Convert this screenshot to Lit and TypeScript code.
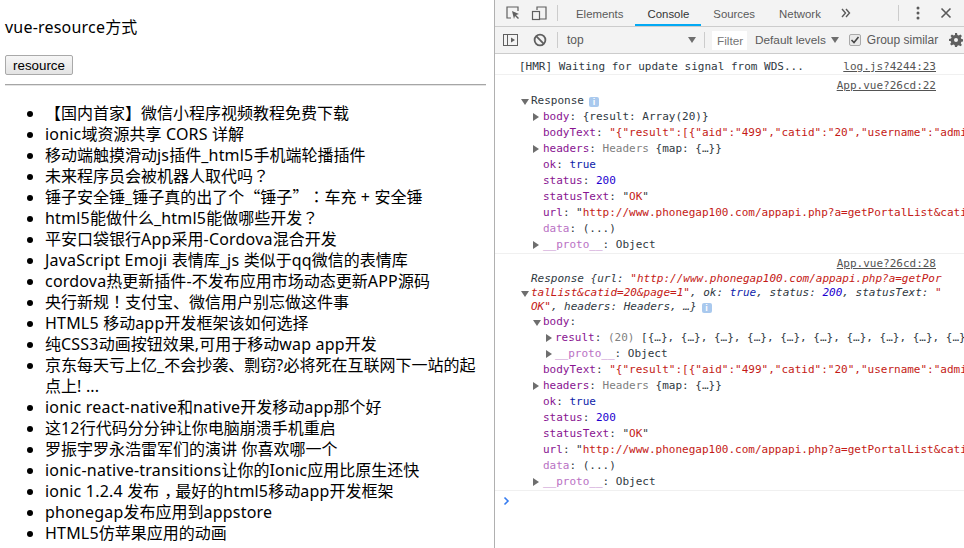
import { LitElement, html, css } from 'lit';
import { customElement } from 'lit/decorators.js';

const ARTICLES = [
  '【国内首家】微信小程序视频教程免费下载',
  'ionic域资源共享 CORS 详解',
  '移动端触摸滑动js插件_html5手机端轮播插件',
  '未来程序员会被机器人取代吗？',
  '锤子安全锤_锤子真的出了个“锤子”：车充 + 安全锤',
  'html5能做什么_html5能做哪些开发？',
  '平安口袋银行App采用-Cordova混合开发',
  'JavaScript Emoji 表情库_js 类似于qq微信的表情库',
  'cordova热更新插件-不发布应用市场动态更新APP源码',
  '央行新规！支付宝、微信用户别忘做这件事',
  'HTML5 移动app开发框架该如何选择',
  '纯CSS3动画按钮效果,可用于移动wap app开发',
  '京东每天亏上亿_不会抄袭、剽窃?必将死在互联网下一站的起点上! ...',
  'ionic react-native和native开发移动app那个好',
  '这12行代码分分钟让你电脑崩溃手机重启',
  '罗振宇罗永浩雷军们的演讲 你喜欢哪一个',
  'ionic-native-transitions让你的Ionic应用比原生还快',
  'ionic 1.2.4 发布，最好的html5移动app开发框架',
  'phonegap发布应用到appstore',
  'HTML5仿苹果应用的动画',
];

const URL_TEXT = 'http://www.phonegap100.com/appapi.php?a=getPortalList&catid=20&page=1';
const BODY_TEXT = '{"result":[{"aid":"499","catid":"20","username":"admin","title":"';

@customElement('app-root')
export class AppRoot extends LitElement {
  static styles = css`
    :host {
      display: flex;
      width: 964px;
      height: 548px;
      overflow: hidden;
      background: #fff;
      color: #000;
      font-family: 'Noto Sans', 'Noto Sans CJK SC', sans-serif;
    }
    .page {
      width: 486px;
      flex: none;
      padding: 0 0 0 5px;
      box-sizing: border-box;
      overflow: hidden;
    }
    .heading {
      margin: 18px 0 0;
      font-size: 16px;
      line-height: 18px;
    }
    .fetch {
      display: block;
      margin: 19px 0 0;
      width: 68px;
      height: 20px;
      padding: 0;
      font: 13.33px 'Liberation Sans', sans-serif;
      color: #000;
      background: linear-gradient(#f6f6f6, #e3e3e3);
      border: 1px solid #a9a9a9;
      border-radius: 2px;
    }
    .rule {
      margin: 9px 0 0;
      height: 2px;
      background: #a6a6a6;
      border-bottom: 1px solid #e4e4e4;
      box-sizing: border-box;
    }
    ul {
      margin: 17px 0 0;
      padding: 0 0 0 40px;
      font-size: 16px;
      line-height: 21px;
      text-spacing-trim: space-all;
    }
    .lat { letter-spacing: 0.2px; }
    .quote { font-family: 'Noto Sans CJK SC', sans-serif; line-height: 1; }
    .punct { font-family: 'Noto Sans CJK TC', sans-serif; line-height: 1; }
    .comma { padding-left: 5px; margin-right: -5px; line-height: 1; }
    .devtools {
      flex: none;
      width: 470px;
      margin-left: 8px;
      border-left: 1px solid #b0b0b0;
      box-sizing: content-box;
      display: flex;
      flex-direction: column;
      overflow: hidden;
      font-family: 'Liberation Sans', sans-serif;
      font-size: 12px;
      color: #5a5a5a;
    }
    .bar {
      flex: none;
      display: flex;
      align-items: center;
      box-sizing: border-box;
      background: #f3f3f3;
      border-bottom: 1px solid #cccccc;
      white-space: nowrap;
    }
    .tabs { height: 27px; }
    .filters { height: 27px; }
    .bar svg { flex: none; display: block; }
    .sep {
      flex: none;
      width: 1px;
      height: 16px;
      background: #cccccc;
    }
    .tab {
      height: 26px;
      line-height: 29px;
      box-sizing: border-box;
      padding: 0 12px;
      font-size: 11.4px;
    }
    .tab.active {
      color: #333;
      border-bottom: 2px solid #03a9f4;
    }
    .context {
      width: 129px;
      margin-left: 9px;
      display: flex;
      justify-content: space-between;
      align-items: center;
      box-sizing: border-box;
      line-height: 17px;
    }
    .caret {
      width: 0;
      height: 0;
      border-left: 4px solid transparent;
      border-right: 4px solid transparent;
      border-top: 6px solid #6e6e6e;
    }
    .filter {
      margin-left: 7px;
      width: 35px;
      height: 19px;
      padding-left: 5px;
      box-sizing: border-box;
      line-height: 21px;
      background: #fff;
      font-size: 11.8px;
      color: #757575;
    }
    .levels {
      margin-left: 8px;
      display: flex;
      align-items: center;
      gap: 5px;
      font-size: 11.8px;
      line-height: 17px;
    }
    .check {
      margin-left: 10px;
      width: 12px;
      height: 12px;
      box-sizing: border-box;
      border: 1px solid #a9a9a9;
      border-radius: 2px;
      background: #e9e9e9;
    }
    .group { margin-left: 6px; line-height: 17px; }
    .log {
      flex: 1;
      min-height: 0;
      overflow: hidden;
      font-family: 'DejaVu Sans Mono', monospace;
      font-size: 11px;
      line-height: 16px;
      color: #303942;
      background: #fff;
    }
    .msg {
      border-bottom: 1px solid #f0f0f0;
      padding-left: 24px;
      white-space: nowrap;
      overflow: hidden;
      box-sizing: border-box;
    }
    .src {
      float: right;
      margin-right: 29px;
      color: #545454;
      text-decoration: underline;
    }
    .first { height: 21px; padding-top: 5px; }
    .entry { padding-top: 3px; height: 179px; }
    .second { height: 237px; padding-top: 2px; }
    .spacer { height: 15px; }
    .row {
      position: relative;
      display: block;
      height: 16px;
    }
    .lvl0 { padding-left: 12px; }
    .lvl1 { padding-left: 24px; }
    .lvl2 { padding-left: 36px; }
    .arrow {
      position: absolute;
      top: 4px;
      width: 0;
      height: 0;
    }
    .lvl0 .arrow { left: 2px; }
    .lvl1 .arrow { left: 14px; }
    .lvl2 .arrow { left: 27px; }
    .arrow.right {
      border-top: 4px solid transparent;
      border-bottom: 4px solid transparent;
      border-left: 6px solid #6e6e6e;
    }
    .arrow.down {
      top: 6px;
      border-left: 4px solid transparent;
      border-right: 4px solid transparent;
      border-top: 6px solid #6e6e6e;
    }
    .k { color: #881391; }
    .k.dim { color: #b971c4; }
    .str { color: #c41a16; }
    .num { color: #1c00cf; }
    .bool { color: #0d22aa; }
    .gray { color: #808080; }
    .info {
      display: inline-block;
      vertical-align: -1px;
      width: 10px;
      height: 10px;
      margin-left: 5px;
      border-radius: 2px;
      background: #a9c9ee;
      color: #fff;
      font: bold 9px/10px 'Liberation Sans', sans-serif;
      text-align: center;
    }
    .preview {
      position: relative;
      font-style: italic;
      white-space: normal;
      line-break: anywhere;
      width: 424px;
      padding-left: 12px;
      box-sizing: border-box;
      line-height: 14px;
      margin-top: 1px;
      height: 42px;
    }
    .preview .arrow { left: 2px; top: 19px; }
    .prompt {
      padding: 4px 0 0 8px;
      height: 16px;
    }
  `;

  private row(level: number, arrow: string, key: string, value: unknown, dim = false) {
    return html`<span class="row lvl${level}">
      ${arrow ? html`<i class="arrow ${arrow}"></i>` : ''}<span class="k ${dim ? 'dim' : ''}">${key}</span>${value}
    </span>`;
  }

  private responseFields() {
    return html`
      ${this.row(1, '', 'bodyText', html`: <span class="str">"${BODY_TEXT}</span>`)}
      ${this.row(1, 'right', 'headers', html`: <span class="gray">Headers</span> {map: {…}}`)}
      ${this.row(1, '', 'ok', html`: <span class="bool">true</span>`)}
      ${this.row(1, '', 'status', html`: <span class="num">200</span>`)}
      ${this.row(1, '', 'statusText', html`: "<span class="str">OK</span>"`)}
      ${this.row(1, '', 'url', html`: "<span class="str">${URL_TEXT}</span>"`)}
      ${this.row(1, '', 'data', html`: (...)`, true)}
      ${this.row(1, 'right', '__proto__', html`: Object`, true)}
    `;
  }

  // latin runs are a touch wider in the original, ？！： sit centred in their box
  private article(text: string) {
    return text.split(/([“”]|[？！：，]|[!-~ ]+)/).map((part) => {
      if (part === '“' || part === '”') return html`<span class="quote">${part}</span>`;
      if (part === '，') return html`<span class="comma">${part}</span>`;
      if (/^[？！：]$/.test(part)) return html`<span class="punct" lang="zh-Hant">${part}</span>`;
      if (/^[!-~ ]+$/.test(part)) return html`<span class="lat">${part}</span>`;
      return part;
    });
  }

  render() {
    return html`
      <main class="page" lang="zh-CN">
        <p class="heading">${this.article('vue-resource方式')}</p>
        <button class="fetch">resource</button>
        <div class="rule"></div>
        <ul>${ARTICLES.map((a) => html`<li>${this.article(a)}</li>`)}</ul>
      </main>

      <aside class="devtools">
        <div class="bar tabs">
          <svg style="margin-left:10px" width="16" height="16" viewBox="0 0 16 16" fill="none">
            <path d="M6 13H2V2h11v4" stroke="#5f5f5f" stroke-width="1.2"/>
            <path d="M7 6l7 3-3 1 3 3-1 1-3-3-1 3z" fill="#5f5f5f"/>
          </svg>
          <svg style="margin-left:10px" width="18" height="16" viewBox="0 0 18 16" fill="none" stroke="#5f5f5f" stroke-width="1.2">
            <path d="M6 5V2h9v12H9"/><rect x="1.5" y="6.5" width="7" height="8"/>
          </svg>
          <div class="sep" style="margin-left:8px"></div>
          <div class="tab" style="margin-left:6px">Elements</div>
          <div class="tab active">Console</div>
          <div class="tab">Sources</div>
          <div class="tab">Network</div>
          <svg style="margin-left:8px" width="10" height="10" viewBox="0 0 10 10" fill="none" stroke="#5a5a5a" stroke-width="1.4">
            <path d="M1 1l3.5 4L1 9M5 1l3.5 4L5 9"/>
          </svg>
          <div class="sep" style="margin-left:47px"></div>
          <svg style="margin-left:17px" width="4" height="14" viewBox="0 0 4 14" fill="#5a5a5a">
            <circle cx="2" cy="2" r="1.5"/><circle cx="2" cy="7" r="1.5"/><circle cx="2" cy="12" r="1.5"/>
          </svg>
          <svg style="margin-left:20px" width="12" height="12" viewBox="0 0 12 12" fill="none" stroke="#5a5a5a" stroke-width="1.6">
            <path d="M1.5 1.5l9 9M10.5 1.5l-9 9"/>
          </svg>
        </div>

        <div class="bar filters">
          <svg style="margin-left:8px" width="16" height="14" viewBox="0 0 16 14" fill="none">
            <rect x="0.5" y="1.5" width="14" height="11" stroke="#5f5f5f"/>
            <path d="M4.5 2v10" stroke="#5f5f5f"/><path d="M8 4.500l4 2.500-4 2.500z" fill="#5f5f5f"/>
          </svg>
          <svg style="margin-left:14px" width="14" height="14" viewBox="0 0 14 14" fill="none" stroke="#5f5f5f" stroke-width="1.8">
            <circle cx="7" cy="7" r="5.4"/><path d="M3.200 3.200l7.600 7.600"/>
          </svg>
          <div class="sep" style="margin-left:10px"></div>
          <div class="context"><span style="padding-top:1px">top</span><i class="caret"></i></div>
          <div class="sep" style="margin-left:8px"></div>
          <div class="filter">Filter</div>
          <div class="levels"><span>Default levels</span><i class="caret"></i></div>
          <div class="check">
            <svg width="10" height="10" viewBox="0 0 10 10" fill="none" stroke="#444" stroke-width="1.6"><path d="M1.500 5l2.500 2.500L8.500 2"/></svg>
          </div>
          <span class="group">Group similar</span>
          <svg style="margin-left:11px" width="14" height="14" viewBox="0 0 14 14" fill="#5f5f5f">
            <path fill-rule="evenodd" d="M6 0h2l.4 2 1.400.6L11.500 1.500l1.400 1.400-1.100 1.700.6 1.400 2 .4v2l-2 .4-.6 1.400 1.100 1.700-1.400 1.400-1.700-1.100-1.400.6L8 14H6l-.4-2-1.400-.6-1.700 1.100-1.400-1.400 1.100-1.700-.6-1.400L0 8V6l2-.4.6-1.400L1.500 2.900l1.400-1.400 1.700 1.100L6 2zM7 5a2 2 0 100 4 2 2 0 000-4z"/>
          </svg>
        </div>

        <section class="log">
          <div class="msg first"><a class="src">log.js?4244:23</a>[HMR] Waiting for update signal from WDS...</div>

          <div class="msg entry">
            <a class="src">App.vue?26cd:22</a>
            <div class="spacer"></div>
            <span class="row lvl0"><i class="arrow down"></i>Response<i class="info">i</i></span>
            ${this.row(1, 'right', 'body', html`: {result: Array(20)}`)}
            ${this.responseFields()}
          </div>

          <div class="msg second">
            <a class="src">App.vue?26cd:28</a>
            <div class="spacer"></div>
            <div class="preview"><i class="arrow down"></i>Response {url: <span class="str">"${URL_TEXT}"</span>, ok: <span class="bool">true</span>, status: <span class="num">200</span>, statusText: <span class="str">"OK"</span>, headers: Headers, …}<i class="info">i</i></div>
            ${this.row(1, 'down', 'body', ':')}
            ${this.row(2, 'right', 'result', html`: <span class="gray">(20)</span> [{…}, {…}, {…}, {…}, {…}, {…}, {…}, {…}, {…}, {…}, {…}]`)}
            ${this.row(2, 'right', '__proto__', html`: Object`, true)}
            ${this.responseFields()}
          </div>

          <div class="prompt">
            <svg width="8" height="10" viewBox="0 0 8 10" fill="none" stroke="#367cf1" stroke-width="1.6"><path d="M1.500 1.500l3.500 3.500-3.500 3.500"/></svg>
          </div>
        </section>
      </aside>
    `;
  }
}
